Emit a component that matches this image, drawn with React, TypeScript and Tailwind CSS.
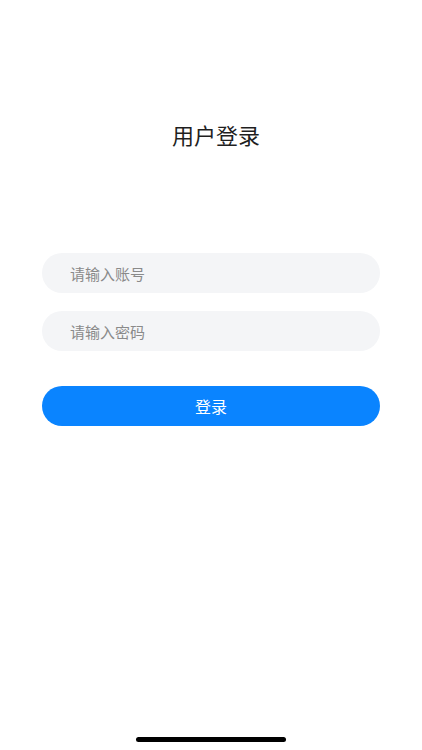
export default function App() {
  return (
    <div
      className="relative flex h-[750px] w-full flex-col items-center bg-white"
      style={{ fontFamily: '"PingFang SC", "Noto Sans CJK SC", sans-serif' }}
    >
      <h1 className="mt-[118px] pl-[10px] text-[22px] leading-[32px] font-normal text-[#1f1f1f]">用户登录</h1>

      <div className="mt-[103px] flex w-full flex-col px-[42px]">
        <input
          className="h-10 w-full rounded-full bg-[#f4f5f7] pl-7 text-[15px] text-[#333] outline-none placeholder:text-[#8a8a8a]"
          placeholder="请输入账号"
        />
        <input
          type="password"
          className="mt-[18px] h-10 w-full rounded-full bg-[#f4f5f7] pl-7 text-[15px] text-[#333] outline-none placeholder:text-[#8a8a8a]"
          placeholder="请输入密码"
        />
        <button className="mt-[35px] h-10 w-full rounded-full bg-[#0a84ff] text-[16px] text-white">
          登录
        </button>
      </div>

      <div className="absolute bottom-[8px] left-1/2 h-[5px] w-[150px] -translate-x-1/2 rounded-full bg-black" />
    </div>
  )
}
